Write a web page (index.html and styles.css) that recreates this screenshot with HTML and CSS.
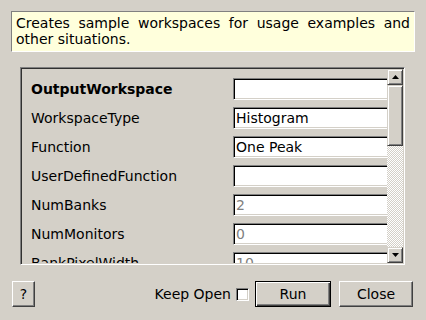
FILE: index.html
```html
<!DOCTYPE html>
<html>
<head>
    <title>CreateSampleWorkspace</title>
    <link rel="stylesheet" href="styles.css">
</head>
<body>
    <div class="dialog">
        <div class="description">Creates sample workspaces for usage examples and other situations.</div>

        <div class="panel">
            <div class="props">
                <div class="row">
                    <span class="label bold">OutputWorkspace</span>
                    <input class="field" type="text" value="">
                </div>
                <div class="row">
                    <span class="label">WorkspaceType</span>
                    <input class="field" type="text" value="Histogram">
                </div>
                <div class="row">
                    <span class="label">Function</span>
                    <input class="field" type="text" value="One Peak">
                </div>
                <div class="row">
                    <span class="label">UserDefinedFunction</span>
                    <input class="field" type="text" value="">
                </div>
                <div class="row">
                    <span class="label">NumBanks</span>
                    <input class="field dim" type="text" value="2">
                </div>
                <div class="row">
                    <span class="label">NumMonitors</span>
                    <input class="field dim" type="text" value="0">
                </div>
                <div class="row">
                    <span class="label">BankPixelWidth</span>
                    <input class="field dim" type="text" value="10">
                </div>
            </div>
            <div class="scrollbar">
                <div class="arrow">
                    <svg width="7" height="4" viewBox="0 0 7 4"><path d="M3.5 0 L7 4 L0 4 Z" fill="#000"/></svg>
                </div>
                <div class="thumb"></div>
                <div class="track"></div>
                <div class="arrow">
                    <svg width="7" height="4" viewBox="0 0 7 4"><path d="M0 0 L7 0 L3.5 4 Z" fill="#000"/></svg>
                </div>
            </div>
        </div>

        <div class="footer">
            <button class="btn help">?</button>
            <div class="spacer"></div>
            <span class="keep">Keep Open</span>
            <span class="check"></span>
            <button class="btn run">Run</button>
            <button class="btn close">Close</button>
        </div>
    </div>
</body>
</html>
```

FILE: styles.css
```css
body {
    margin: 0;
    background-color: #d4d0c8;
    font-family: "DejaVu Sans", sans-serif;
    font-size: 14px;
    color: #000;
}

.dialog {
    width: 426px;
    height: 320px;
    overflow: hidden;
}

.description {
    box-sizing: border-box;
    margin: 11px 11px 0 11px;
    height: 41px;
    padding: 3px 4px 0 4px;
    background-color: #ffffdc;
    border: 1px solid;
    border-color: #808080 #ffffff #ffffff #808080;
    text-align: justify;
    line-height: 16px;
}

.panel {
    box-sizing: border-box;
    display: flex;
    margin: 15px 0 0 20px;
    width: 385px;
    height: 198px;
    border: 1px solid;
    border-color: #808080 #ffffff #ffffff #808080;
    box-shadow: inset 1px 1px #303030, inset -1px -1px #d4d0c8;
    padding: 1px;
}

.props {
    flex: 1;
    overflow: hidden;
    padding: 9px 0 0 9px;
}

.row {
    display: flex;
    align-items: center;
    height: 22px;
    margin-bottom: 7px;
}

.label {
    width: 202px;
    flex: none;
    white-space: nowrap;
}

.bold {
    font-weight: bold;
}

.field {
    box-sizing: border-box;
    flex: none;
    width: 170px;
    height: 22px;
    margin: 0;
    padding: 0 2px;
    font-family: "DejaVu Sans", sans-serif;
    font-size: 14px;
    color: #000;
    background-color: #fff;
    border: 1px solid;
    border-color: #808080 #ffffff #ffffff #808080;
    box-shadow: inset 1px 1px #000, inset -1px -1px #d4d0c8;
    outline: none;
}

.field.dim {
    color: #808080;
}

.scrollbar {
    display: flex;
    flex-direction: column;
    width: 16px;
    flex: none;
}

.arrow,
.thumb {
    box-sizing: border-box;
    background-color: #d4d0c8;
    border: 1px solid;
    border-color: #d4d0c8 #404040 #404040 #d4d0c8;
    box-shadow: inset 1px 1px #ffffff, inset -1px -1px #808080;
}

.arrow {
    height: 16px;
    display: flex;
    align-items: center;
    justify-content: center;
}

.thumb {
    height: 61px;
}

.track {
    flex: 1;
    background: repeating-conic-gradient(#ffffff 0 25%, #d4d0c8 0 50%) 0 0 / 2px 2px;
}

.footer {
    display: flex;
    align-items: center;
    margin-top: 16px;
    padding: 0 13px 0 12px;
    height: 26px;
}

.spacer {
    flex: 1;
}

.btn {
    box-sizing: border-box;
    height: 26px;
    padding: 0;
    font-family: "DejaVu Sans", sans-serif;
    font-size: 14px;
    color: #000;
    background-color: #d4d0c8;
    border: 1px solid;
    border-color: #ffffff #404040 #404040 #ffffff;
    box-shadow: inset -1px -1px #808080;
}

.help {
    width: 23px;
}

.keep {
    white-space: nowrap;
}

.check {
    box-sizing: border-box;
    width: 13px;
    height: 13px;
    margin-left: 5px;
    background-color: #fff;
    border: 1px solid;
    border-color: #808080 #ffffff #ffffff #808080;
    box-shadow: inset 1px 1px #000, inset -1px -1px #d4d0c8;
}

.run {
    width: 76px;
    margin-left: 6px;
    border: 1px solid #000;
    box-shadow: inset 1px 1px #ffffff, inset -1px -1px #404040, inset -2px -2px #808080;
}

.close {
    width: 74px;
    margin-left: 8px;
}
```
